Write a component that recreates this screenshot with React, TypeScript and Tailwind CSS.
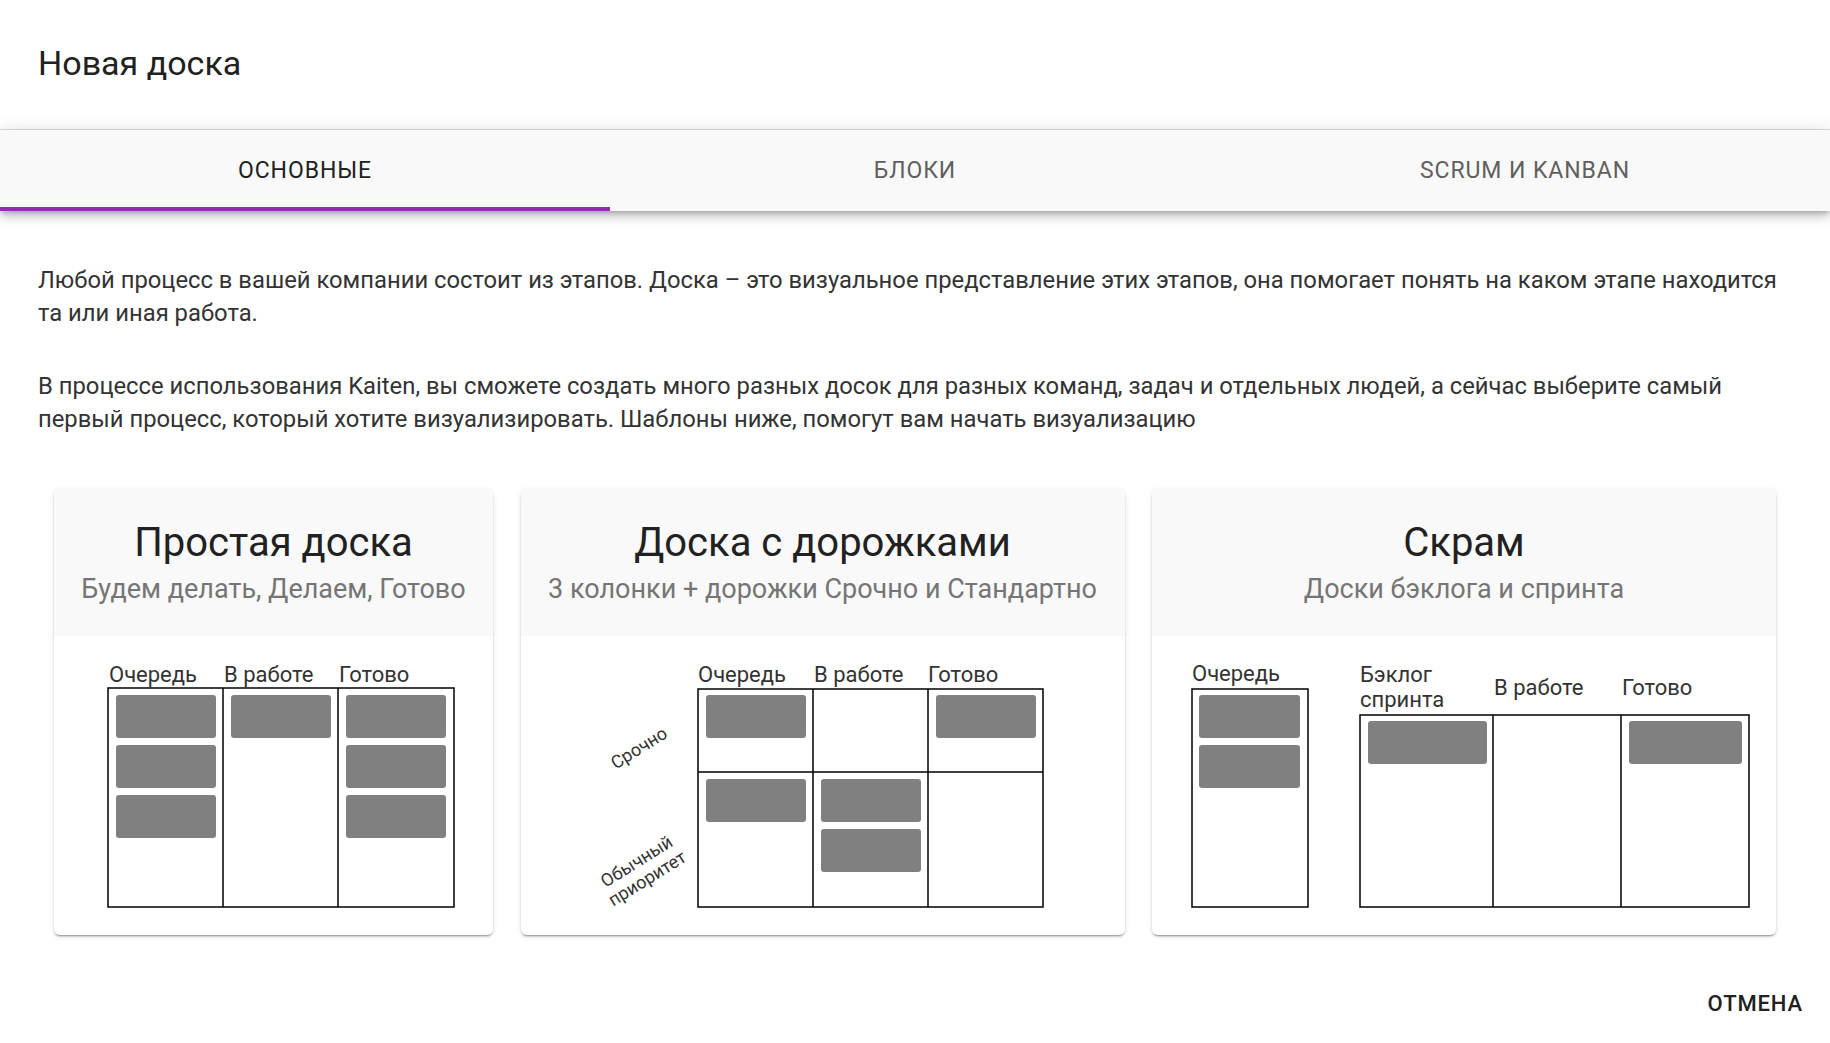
import React from "react"

const font = { fontFamily: "Roboto, 'Noto Sans', sans-serif" }

type Box = { x: number; y: number; w?: number }

function Cards({ items, w = 100 }: { items: Box[]; w?: number }) {
  return (
    <>
      {items.map((c, i) => (
        <rect key={i} x={c.x} y={c.y} width={c.w ?? w} height={43} rx={3} fill="#808080" />
      ))}
    </>
  )
}

function Label({ x, y, children }: { x: number; y: number; children: React.ReactNode }) {
  return (
    <text x={x} y={y} fontSize={22} fill="#333333" style={font}>
      {children}
    </text>
  )
}

function SimpleBoard() {
  return (
    <svg width={439} height={299} viewBox="0 0 439 299">
      <Label x={55} y={46}>Очередь</Label>
      <Label x={170} y={46}>В работе</Label>
      <Label x={285} y={46}>Готово</Label>
      <rect x={54} y={52} width={346} height={219} fill="white" stroke="black" strokeWidth={1.5} />
      <line x1={169} y1={52} x2={169} y2={271} stroke="black" strokeWidth={1.5} />
      <line x1={284} y1={52} x2={284} y2={271} stroke="black" strokeWidth={1.5} />
      <Cards
        items={[
          { x: 62, y: 59 },
          { x: 62, y: 109 },
          { x: 62, y: 159 },
          { x: 177, y: 59 },
          { x: 292, y: 59 },
          { x: 292, y: 109 },
          { x: 292, y: 159 },
        ]}
      />
    </svg>
  )
}

function LanesBoard() {
  return (
    <svg width={604} height={299} viewBox="0 0 604 299">
      <Label x={177} y={46}>Очередь</Label>
      <Label x={293} y={46}>В работе</Label>
      <Label x={407} y={46}>Готово</Label>
      <rect x={177} y={53} width={345} height={218} fill="white" stroke="black" strokeWidth={1.5} />
      <line x1={292} y1={53} x2={292} y2={271} stroke="black" strokeWidth={1.5} />
      <line x1={407} y1={53} x2={407} y2={271} stroke="black" strokeWidth={1.5} />
      <line x1={177} y1={136} x2={522} y2={136} stroke="black" strokeWidth={1.5} />
      <Cards
        items={[
          { x: 185, y: 59 },
          { x: 415, y: 59 },
          { x: 185, y: 143 },
          { x: 300, y: 143 },
          { x: 300, y: 193 },
        ]}
      />
      <text
        x={118}
        y={118}
        fontSize={18}
        fill="#333333"
        textAnchor="middle"
        transform="rotate(-32 118 112)"
        style={font}
      >
        Срочно
      </text>
      <text fontSize={18} fill="#333333" textAnchor="middle" transform="rotate(-32 121 234)" style={font}>
        <tspan x={121} y={230}>
          Обычный
        </tspan>
        <tspan x={121} y={250}>
          приоритет
        </tspan>
      </text>
    </svg>
  )
}

function ScrumBoard() {
  return (
    <svg width={624} height={299} viewBox="0 0 624 299">
      <Label x={40} y={45}>Очередь</Label>
      <rect x={40} y={53} width={116} height={218} fill="white" stroke="black" strokeWidth={1.5} />
      <Cards
        w={101}
        items={[
          { x: 47, y: 59 },
          { x: 47, y: 109 },
        ]}
      />
      <Label x={208} y={46}>Бэклог</Label>
      <Label x={208} y={71}>спринта</Label>
      <Label x={342} y={59}>В работе</Label>
      <Label x={470} y={59}>Готово</Label>
      <rect x={208} y={79} width={389} height={192} fill="white" stroke="black" strokeWidth={1.5} />
      <line x1={341} y1={79} x2={341} y2={271} stroke="black" strokeWidth={1.5} />
      <line x1={469} y1={79} x2={469} y2={271} stroke="black" strokeWidth={1.5} />
      <Cards
        items={[
          { x: 216, y: 85, w: 119 },
          { x: 477, y: 85, w: 113 },
        ]}
      />
    </svg>
  )
}

const templates = [
  { title: "Простая доска", subtitle: "Будем делать, Делаем, Готово", width: "w-[439px]", board: <SimpleBoard /> },
  {
    title: "Доска с дорожками",
    subtitle: "3 колонки + дорожки Срочно и Стандартно",
    width: "w-[604px]",
    board: <LanesBoard />,
  },
  { title: "Скрам", subtitle: "Доски бэклога и спринта", width: "w-[624px]", board: <ScrumBoard /> },
]

const tabs = ["ОСНОВНЫЕ", "БЛОКИ", "SCRUM И KANBAN"]

export default function App() {
  return (
    <div className="min-h-screen bg-white text-[#212121]" style={font}>
      <div className="h-[130px] border-b border-[#e0e0e0] px-[38px] pt-[43px]">
        <h2 className="text-[34px] leading-[40px] font-normal">Новая доска</h2>
      </div>

      <div className="relative z-10 flex bg-[#f9f9f9] shadow-[0_3px_5px_-1px_rgba(0,0,0,0.2),0_6px_10px_0_rgba(0,0,0,0.14),0_1px_18px_0_rgba(0,0,0,0.12)]">
        {tabs.map((tab, i) => (
          <button
            key={tab}
            className={
              "flex h-[81px] flex-1 items-center justify-center border-b-[4px] pt-[6px] text-[23px] tracking-[0.04em] " +
              (i === 0 ? "border-[#9c27b0] text-[#212121]" : "border-transparent text-[#5f5f5f]")
            }
          >
            {tab}
          </button>
        ))}
      </div>

      <div className="px-[38px] pt-[53px] text-[23.8px] leading-[33px] text-[#333333]">
        <p>
          Любой процесс в вашей компании состоит из этапов. Доска – это визуальное представление этих этапов, она
          помогает понять на каком этапе находится та или иная работа.
        </p>
        <p className="mt-[40px]">
          В процессе использования Kaiten, вы сможете создать много разных досок для разных команд, задач и отдельных
          людей, а сейчас выберите самый первый процесс, который хотите визуализировать. Шаблоны ниже, помогут вам
          начать визуализацию
        </p>
      </div>

      <div className="mt-[53px] flex items-start justify-between px-[54px]">
        {templates.map((t) => (
          <div
            key={t.title}
            className={
              t.width +
              " overflow-hidden rounded-md bg-white shadow-[0_3px_1px_-2px_rgba(0,0,0,0.2),0_2px_2px_0_rgba(0,0,0,0.14),0_1px_5px_0_rgba(0,0,0,0.12)]"
            }
          >
            <div className="bg-[#f9f9f9] px-4 pt-[30px] pb-[31px] text-center">
              <div className="text-[40px] leading-[48px] text-[#212121]">{t.title}</div>
              <div className="mt-[6px] text-[27px] leading-[32px] text-[#757575]">{t.subtitle}</div>
            </div>
            {t.board}
          </div>
        ))}
      </div>

      <div className="mt-[56px] flex justify-end pr-[27px]">
        <button className="text-[22px] leading-[26px] font-medium tracking-[0.04em] text-[#212121]">ОТМЕНА</button>
      </div>
    </div>
  )
}
